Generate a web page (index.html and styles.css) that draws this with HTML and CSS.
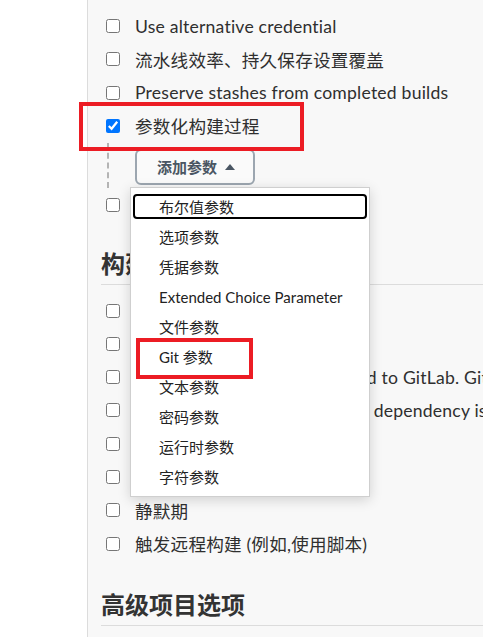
FILE: index.html
```html
<!DOCTYPE html>
<html lang="zh-CN">
<head>
<meta charset="utf-8">
<title>参数化构建过程</title>
<link rel="stylesheet" href="styles.css">
</head>
<body>
<div class="page">
  <aside class="side"></aside>
  <main class="main">
    <section class="opts">
      <label class="opt"><input type="checkbox"><span>Use alternative credential</span></label>
      <label class="opt"><input type="checkbox"><span>流水线效率、持久保存设置覆盖</span></label>
      <label class="opt"><input type="checkbox"><span>Preserve stashes from completed builds</span></label>
      <label class="opt"><input type="checkbox" checked><span>参数化构建过程</span></label>
      <div class="nested">
        <div class="dd">
          <button class="add-btn" type="button">添加参数
            <svg class="caret" width="10" height="6" viewBox="0 0 10 6"><path d="M0 6 L5 0 L10 6 Z" fill="currentColor"/></svg>
          </button>
          <ul class="menu">
            <li class="focus">布尔值参数</li>
            <li>选项参数</li>
            <li>凭据参数</li>
            <li>Extended Choice Parameter</li>
            <li>文件参数</li>
            <li>Git 参数</li>
            <li>文本参数</li>
            <li>密码参数</li>
            <li>运行时参数</li>
            <li>字符参数</li>
          </ul>
        </div>
      </div>
      <label class="opt"><input type="checkbox"><span>在必要的时候并发构建</span></label>
    </section>

    <h2 class="sec-title">构建触发器</h2>
    <section class="opts">
      <label class="opt"><input type="checkbox"><span>其他工程构建后触发</span></label>
      <label class="opt"><input type="checkbox"><span>定时构建</span></label>
      <label class="opt"><input type="checkbox"><span>Build when a change is pushed to GitLab. GitLab webhook URL: http://jenkins/project/demo</span></label>
      <label class="opt"><input type="checkbox"><span>Build whenever a SNAPSHOT dependency is built</span></label>
      <label class="opt"><input type="checkbox"><span>GitHub 钩子触发</span></label>
      <label class="opt"><input type="checkbox"><span>轮询 SCM</span></label>
      <label class="opt"><input type="checkbox"><span>静默期</span></label>
      <label class="opt"><input type="checkbox"><span>触发远程构建 (例如,使用脚本)</span></label>
    </section>

    <h2 class="sec-title sec-title-2">高级项目选项</h2>
  </main>
</div>
<div class="mark mark-param"></div>
<div class="mark mark-git"></div>
</body>
</html>
```

FILE: styles.css
```css
html, body {
  margin: 0;
  padding: 0;
  height: 100%;
  overflow: hidden;
}

body {
  font-family: Lato, "Noto Sans CJK SC", sans-serif;
  color: #333;
  background: #fff;
}

.page {
  display: flex;
  min-height: 100vh;
}

.side {
  width: 87px;
  flex: none;
  background: #fff;
  border-right: 1px solid #dcdcdc;
}

.main {
  flex: 1;
  min-width: 0;
  background: #f8f8f8;
  padding-top: 9.4px;
  overflow: hidden;
}

.opts {
  padding-left: 18px;
}

.opt {
  display: flex;
  align-items: center;
  gap: 15px;
  height: 33.3px;
  font-size: 17.6px;
  letter-spacing: 0.2px;
  color: #2f2f2f;
  white-space: nowrap;
}

.opt input {
  width: 14px;
  height: 14px;
  margin: 0;
  flex: none;
}

.nested {
  margin-left: 1px;
  padding: 6px 0 3.5px 26px;
  border-left: 2px dashed #b4b4b4;
  width: max-content;
}

.dd {
  position: relative;
}

.add-btn {
  display: flex;
  align-items: center;
  gap: 8px;
  box-sizing: border-box;
  width: 120px;
  height: 36px;
  padding: 0 0 0 20px;
  border: 2px solid #9ca6b0;
  border-radius: 6px;
  background: #fafafa;
  color: #4a5663;
  font-family: Lato, "Noto Sans CJK SC", sans-serif;
  font-size: 15px;
  font-weight: 700;
}

.caret {
  display: block;
}

.menu {
  position: absolute;
  left: -5px;
  top: 38px;
  z-index: 5;
  box-sizing: border-box;
  width: 240px;
  margin: 0;
  padding: 4px 0;
  list-style: none;
  background: #fff;
  border: 1px solid #cfcfcf;
  box-shadow: 0 3px 12px rgba(0, 0, 0, 0.16);
}

.menu li {
  position: relative;
  height: 30px;
  line-height: 30px;
  padding-left: 28px;
  font-size: 15px;
  color: #222;
  white-space: nowrap;
}

.menu li.focus::before {
  content: "";
  position: absolute;
  left: 2px;
  right: 2px;
  top: 2px;
  bottom: 3px;
  border: 2px solid #000;
  border-radius: 4px;
}

.sec-title {
  margin: 28px 0 8.5px 13px;
  padding-bottom: 5px;
  border-bottom: 1px solid #dcdcdc;
  font-size: 24px;
  line-height: 30px;
  font-weight: 700;
  color: #333;
  white-space: nowrap;
}

.sec-title-2 {
  margin-top: 30px;
}

.mark {
  position: absolute;
  box-sizing: border-box;
  border: 4px solid #ec1c24;
  z-index: 10;
}

.mark-param {
  left: 79px;
  top: 102px;
  width: 225px;
  height: 49px;
}

.mark-git {
  left: 136px;
  top: 338px;
  width: 117px;
  height: 41px;
}
```
